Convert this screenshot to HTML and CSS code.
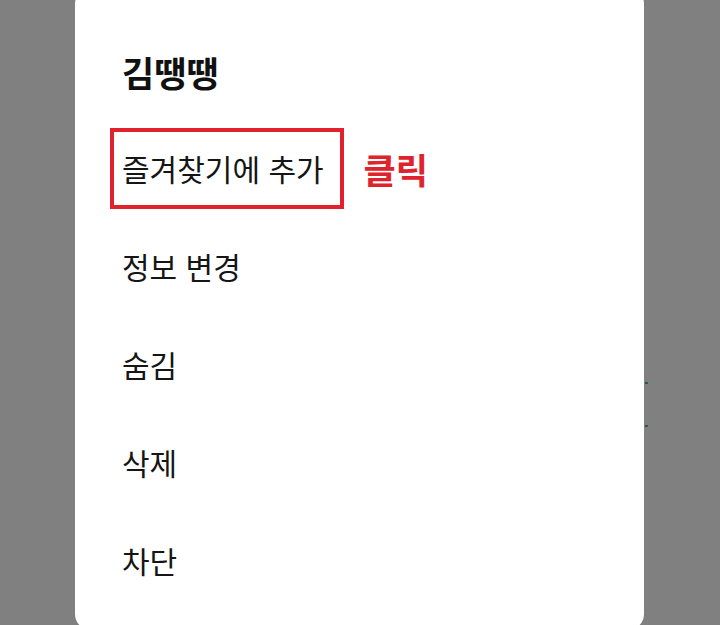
FILE: index.html
```html
<!DOCTYPE html>
<html lang="ko">
<head>
    <meta charset="UTF-8">
    <meta name="viewport" content="width=device-width, initial-scale=1.0">
    <title>김땡땡</title>
    <link rel="stylesheet" href="styles.css">
</head>
<body>
    <div class="backdrop">
        <!-- bits of the list behind the dialog -->
        <span class="mark mark-one"></span>
        <span class="mark mark-two"></span>

        <div class="sheet">
            <h1 class="sheet-title">김땡땡</h1>
            <ul class="menu">
                <li class="menu-item">
                    <span class="highlight">즐겨찾기에 추가</span>
                    <span class="click-label">클릭</span>
                </li>
                <li class="menu-item">정보 변경</li>
                <li class="menu-item">숨김</li>
                <li class="menu-item">삭제</li>
                <li class="menu-item">차단</li>
            </ul>
        </div>
    </div>
</body>
</html>
```

FILE: styles.css
```css
html, body {
    margin: 0;
    padding: 0;
}
body {
    font-family: "Noto Sans CJK KR", "Noto Sans", sans-serif;
    background-color: #808080;
    color: #111;
    overflow: hidden;
}
.backdrop {
    position: relative;
    width: 720px;
    height: 625px;
    overflow: hidden;
}
.mark {
    position: absolute;
    left: 645px;
    width: 3px;
    height: 2px;
    background-color: #2f5a44;
}
.mark-one {
    top: 382px;
}
.mark-two {
    top: 425px;
}
.sheet {
    margin-top: -12px;
    margin-left: 75px;
    width: 569px;
    height: 642px;
    box-sizing: border-box;
    padding: 63px 0 0 47px;
    background-color: #fff;
    border-radius: 16px;
}
.sheet-title {
    margin: 0 0 27px;
    font-size: 35px;
    line-height: 41px;
    font-weight: 700;
    color: #111;
}
.menu {
    list-style: none;
    margin: 0;
    padding: 0;
}
.menu-item {
    display: flex;
    align-items: center;
    height: 98px;
    font-size: 30px;
    color: #151515;
}
.highlight {
    display: flex;
    align-items: center;
    height: 73px;
    margin-left: -12px;
    padding: 0 16px 0 8px;
    border: 4px solid #e0222d;
}
.click-label {
    margin-left: 20px;
    font-size: 35px;
    font-weight: 700;
    color: #e0222d;
}
```
